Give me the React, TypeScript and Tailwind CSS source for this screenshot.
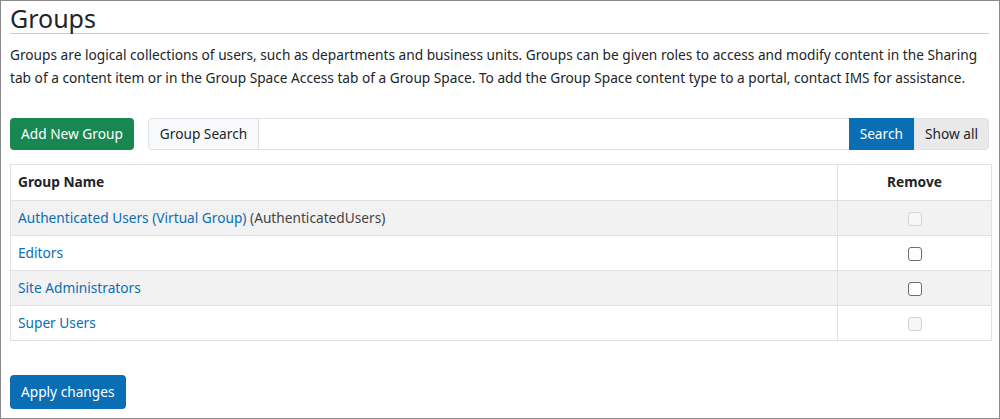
export default function App() {
  const rows = [
    { name: "Authenticated Users (Virtual Group)", extra: " (AuthenticatedUsers)", dis: true },
    { name: "Editors", dis: false },
    { name: "Site Administrators", dis: false },
    { name: "Super Users", dis: true },
  ];
  return (
    <div className="w-[1000px] h-[419px] border border-[#8a8a8a] bg-white text-[#212529] overflow-hidden" style={{ fontFamily: '"Noto Sans",sans-serif' }}>
      <div className="px-[9px]">
        <h1 className="text-[25px] leading-[30px] pt-[2px] border-b border-[#ccc] mr-[1px]">Groups</h1>
        <p className="text-[13.7px] leading-[23px] mt-[9px]">Groups are logical collections of users, such as departments and business units. Groups can be given roles to access and modify content in the Sharing tab of a content item or in the Group Space Access tab of a Group Space. To add the Group Space content type to a portal, contact IMS for assistance.</p>
        <div className="flex items-center mt-[29px] h-[32px] pr-[1px]">
          <button className="h-[32px] px-[11px] bg-[#198754] text-white text-[13.7px] rounded-[4px]">Add New Group</button>
          <div className="flex flex-1 ml-[14px] h-[32px]">
            <span className="flex items-center px-[11px] text-[13.7px] bg-[#f8f9fa] border border-[#dee2e6] rounded-l-[4px]">Group Search</span>
            <input className="flex-1 border-y border-[#dee2e6] outline-none" />
            <button className="px-[11px] bg-[#0a6eb4] text-white text-[13.7px]">Search</button>
            <button className="px-[10px] bg-[#e9e9e9] text-[13.7px] border border-[#dee2e6] rounded-r-[4px]">Show all</button>
          </div>
        </div>
        <table className="w-[982px] mt-[14px] border-collapse text-[13.7px]">
          <thead>
            <tr className="h-[36px]">
              <th className="border border-[#dee2e6] text-left px-[7px] font-bold">Group Name</th>
              <th className="border border-[#dee2e6] w-[154px] font-bold">Remove</th>
            </tr>
          </thead>
          <tbody>
            {rows.map((r, i) => (
              <tr key={i} className={`h-[35px] ${i % 2 === 0 ? "bg-[#f2f2f2]" : "bg-white"}`}>
                <td className="border border-[#dee2e6] px-[7px]">
                  <span className="text-[#0a6eb4]">{r.name}</span>
                  {r.extra && <span className="text-[#444]">{r.extra}</span>}
                </td>
                <td className="border border-[#dee2e6] text-center">
                  <span className={`inline-block w-[14px] h-[14px] rounded-[3px] border align-middle ${r.dis ? "border-[#d4d4d8] bg-[#f7f7f7]" : "border-[#6b6b78] bg-white"}`} />
                </td>
              </tr>
            ))}
          </tbody>
        </table>
        <button className="mt-[34px] h-[34px] px-[11px] bg-[#0a6eb4] text-white text-[13.7px] rounded-[4px]">Apply changes</button>
      </div>
    </div>
  );
}
